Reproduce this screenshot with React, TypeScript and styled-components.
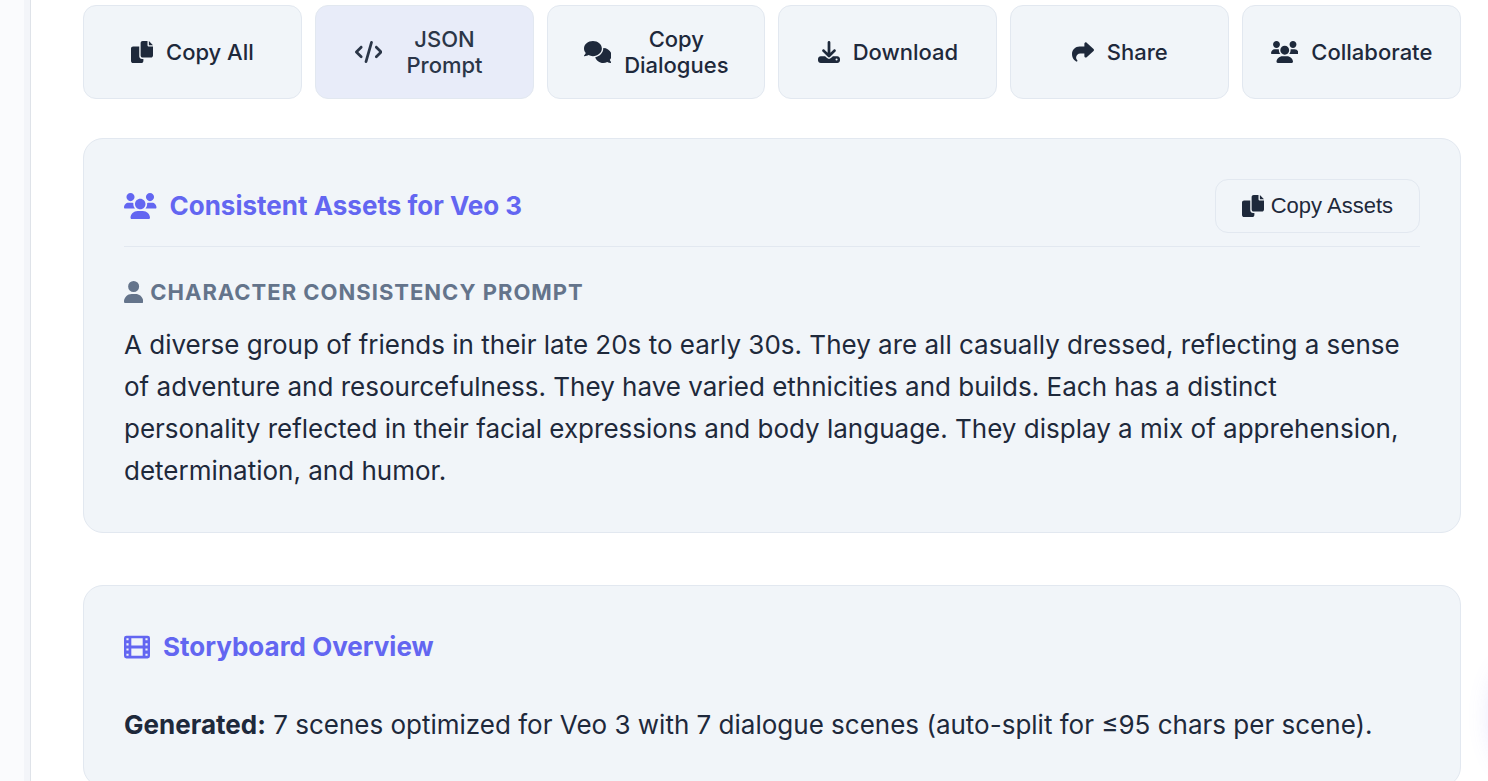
import React from "react";
import styled, { createGlobalStyle } from "styled-components";
import { FaCode, FaDownload, FaShare, FaUser } from "react-icons/fa6";

const GlobalStyle = createGlobalStyle`
  *, *::before, *::after { box-sizing: border-box; }
  html { scrollbar-width: none; }
  html, body { margin: 0; padding: 0; }
  body {
    background: #ffffff;
    color: #1e293b;
    font-family: Inter, "Liberation Sans", sans-serif;
  }
  h2, h3, p { margin: 0; }
`;

const Page = styled.div`
  display: flex;
  min-height: 100vh;
`;

const Gutter = styled.div`
  flex: none;
  width: 30px;
  border-right: 6px solid #f3f5f9;
  background: #fafbfd;
`;

const Panel = styled.main`
  flex: 1;
  min-width: 0;
  padding: 5px 27px 0 52px;
  background: #ffffff;
  border-left: 1px solid #dfe3e9;
`;

const Actions = styled.div`
  display: grid;
  grid-template-columns: repeat(6, minmax(0, 1fr));
  gap: 13px;
  margin-bottom: 39px;
`;

const ActionButton = styled.button<{ $active?: boolean }>`
  display: flex;
  align-items: center;
  justify-content: center;
  gap: 13px;
  height: 94px;
  padding: 0 39px;
  border: 1px solid #e2e8f0;
  border-radius: 13px;
  background: ${(p) => (p.$active ? "#e8ecf9" : "#f1f5f9")};
  color: ${(p) => (p.$active ? "#2b3648" : "#1e293b")};
  font: 500 22px/26px Inter, "Liberation Sans", sans-serif;
  text-align: center;
  cursor: pointer;

  svg { flex: none; }
`;

const Card = styled.section`
  padding: 40px;
  border: 1px solid #e2e8f0;
  border-radius: 20px;
  background: #f1f5f9;

  & + & { margin-top: 52px; }
`;

const CardHeader = styled.header<{ $ruled?: boolean }>`
  display: flex;
  align-items: center;
  justify-content: space-between;
  padding-bottom: ${(p) => (p.$ruled ? "13px" : "0")};
  margin-bottom: ${(p) => (p.$ruled ? "26px" : "36px")};
  border-bottom: ${(p) => (p.$ruled ? "1px solid #e2e8f0" : "none")};
`;

const CardTitle = styled.h2`
  display: flex;
  align-items: center;
  gap: 13px;
  color: #6366f1;
  font-size: 26px;
  font-weight: 700;
  line-height: 42px;
`;

const SmallButton = styled.button`
  display: flex;
  align-items: center;
  gap: 7px;
  height: 54px;
  padding: 0 26px;
  border: 1px solid #e2e8f0;
  border-radius: 13px;
  background: transparent;
  color: #1e293b;
  font: 400 22px/26px "Liberation Sans", Arial, sans-serif;
  cursor: pointer;
`;

const Label = styled.h3`
  display: flex;
  align-items: center;
  gap: 7px;
  margin-bottom: 13px;
  color: #64748b;
  font-size: 22px;
  font-weight: 700;
  line-height: 38px;
  letter-spacing: 1px;
  text-transform: uppercase;
`;

const Text = styled.p`
  font-size: 26px;
  line-height: 42px;

  strong { font-weight: 700; }
`;

const Glow = styled.div`
  position: fixed;
  right: -60px;
  bottom: 13px;
  width: 54px;
  height: 104px;
  border-radius: 50%;
  box-shadow: 0 0 26px rgba(99, 102, 241, 0.22);
`;

type GlyphProps = { size: number };

const CopyIcon = ({ size }: GlyphProps) => (
  <svg width={size} height={size} viewBox="0 0 512 512" fill="currentColor" aria-hidden="true">
    <path d="M384 96L384 0h-112c-26.51 0-48 21.49-48 48v288c0 26.51 21.49 48 48 48H464c26.51 0 48-21.49 48-48V128h-95.1C398.4 128 384 113.6 384 96zM416 0v96h96L416 0zM192 352V128h-144c-26.51 0-48 21.49-48 48v288c0 26.51 21.49 48 48 48h192c26.51 0 48-21.49 48-48L288 416h-32C220.7 416 192 387.3 192 352z" />
  </svg>
);

const CommentsIcon = ({ size }: GlyphProps) => (
  <svg width={size * 1.25} height={size} viewBox="0 0 640 512" fill="currentColor" aria-hidden="true">
    <path d="M416 176C416 78.8 322.9 0 208 0S0 78.8 0 176c0 39.57 15.62 75.96 41.67 105.4c-16.39 32.76-39.23 57.32-39.59 57.68c-2.1 2.205-2.67 5.475-1.441 8.354C1.9 350.3 4.602 352 7.66 352c38.35 0 70.76-11.12 95.74-24.04C134.2 343.1 169.8 352 208 352C322.9 352 416 273.2 416 176zM599.6 443.7C624.8 413.9 640 376.6 640 336C640 238.8 554 160 448 160c-.3145 0-.6191 .041-.9336 .043C447.5 165.3 448 170.6 448 176c0 98.62-79.68 181.2-186.1 202.5C282.7 455.1 357.1 512 448 512c33.69 0 65.32-8.008 92.85-21.98C565.2 502 596.1 512 632.3 512c3.059 0 5.76-1.725 7.02-4.605c1.229-2.879 .6582-6.148-1.441-8.354C637.6 498.7 615.9 475.3 599.6 443.7z" />
  </svg>
);

const UsersIcon = ({ size }: GlyphProps) => (
  <svg width={size * 1.25} height={size} viewBox="0 0 640 512" fill="currentColor" aria-hidden="true">
    <path d="M319.9 320c57.41 0 103.1-46.56 103.1-104c0-57.44-46.54-104-103.1-104c-57.41 0-103.1 46.56-103.1 104C215.9 273.4 262.5 320 319.9 320zM369.9 352H270.1C191.6 352 128 411.7 128 485.3C128 500.1 140.7 512 156.4 512h327.2C499.3 512 512 500.1 512 485.3C512 411.7 448.4 352 369.9 352zM512 160c44.18 0 80-35.82 80-80S556.2 0 512 0c-44.18 0-80 35.82-80 80S467.8 160 512 160zM183.9 216c0-5.449 .9824-10.63 1.609-15.91C174.6 194.1 162.6 192 149.9 192H88.08C39.44 192 0 233.8 0 285.3C0 295.6 7.887 304 17.62 304h199.5C196.7 280.2 183.9 249.9 183.9 216zM128 160c44.18 0 80-35.82 80-80S172.2 0 128 0C83.82 0 48 35.82 48 80S83.82 160 128 160zM551.9 192h-61.84c-12.8 0-24.88 3.037-35.86 8.24C454.8 205.5 455.8 210.6 455.8 216c0 33.71-12.78 64.21-33.16 88h199.7C632.1 304 640 295.6 640 285.3C640 233.8 600.6 192 551.9 192z" />
  </svg>
);

const FilmIcon = ({ size }: GlyphProps) => (
  <svg width={size} height={size} viewBox="0 0 512 512" fill="currentColor" aria-hidden="true">
    <path
      fillRule="evenodd"
      d="M48 32H464a48 48 0 0 1 48 48V432a48 48 0 0 1-48 48H48a48 48 0 0 1-48-48V80a48 48 0 0 1 48-48zM144 84V226H368V84zM144 284V426H368V284zM48 84V124H90V84zM48 184V224H90V184zM48 286V326H90V286zM48 388V428H90V388zM422 84V124H464V84zM422 184V224H464V184zM422 286V326H464V286zM422 388V428H464V388z"
    />
  </svg>
);

const CodeIcon = ({ size }: GlyphProps) => (
  <FaCode style={{ width: size * 1.25, height: size }} aria-hidden="true" />
);

const UserIcon = ({ size }: GlyphProps) => (
  <FaUser style={{ width: size * 0.875, height: size }} aria-hidden="true" />
);

const actions = [
  { label: "Copy All", icon: <CopyIcon size={22} /> },
  { label: "JSON Prompt", icon: <CodeIcon size={22} />, active: true },
  { label: "Copy Dialogues", icon: <CommentsIcon size={22} /> },
  { label: "Download", icon: <FaDownload size={22} /> },
  { label: "Share", icon: <FaShare size={22} /> },
  { label: "Collaborate", icon: <UsersIcon size={22} /> },
];

export default function App() {
  return (
    <>
      <GlobalStyle />
      <Page>
        <Gutter />
        <Panel>
          <Actions>
            {actions.map((a) => (
              <ActionButton key={a.label} type="button" $active={a.active}>
                {a.icon}
                <span>{a.label}</span>
              </ActionButton>
            ))}
          </Actions>

          <Card>
            <CardHeader $ruled>
              <CardTitle>
                <UsersIcon size={26} />
                Consistent Assets for Veo 3
              </CardTitle>
              <SmallButton type="button">
                <CopyIcon size={22} />
                Copy Assets
              </SmallButton>
            </CardHeader>
            <Label>
              <UserIcon size={22} />
              Character Consistency Prompt
            </Label>
            <Text>
              A diverse group of friends in their late 20s to early 30s. They are all casually
              dressed, reflecting a sense of adventure and resourcefulness. They have varied
              ethnicities and builds. Each has a distinct personality reflected in their facial
              expressions and body language. They display a mix of apprehension, determination,
              and humor.
            </Text>
          </Card>

          <Card>
            <CardHeader>
              <CardTitle>
                <FilmIcon size={26} />
                Storyboard Overview
              </CardTitle>
            </CardHeader>
            <Text>
              <strong>Generated:</strong> 7 scenes optimized for Veo 3 with 7 dialogue scenes
              (auto-split for ≤95 chars per scene).
            </Text>
          </Card>
        </Panel>
        <Glow />
      </Page>
    </>
  );
}
